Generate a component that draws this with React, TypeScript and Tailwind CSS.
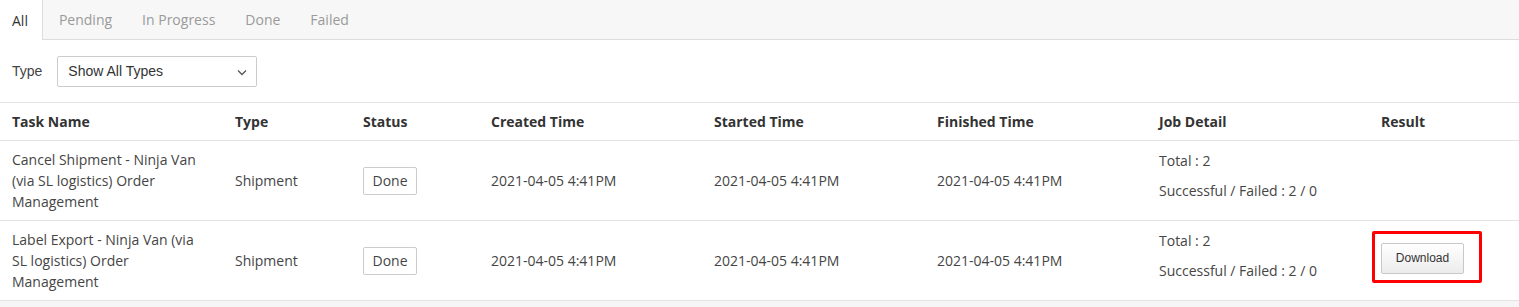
import React from "react";

const tabs = ["All", "Pending", "In Progress", "Done", "Failed"];

const rows = [
  {
    name: "Cancel Shipment - Ninja Van (via SL logistics) Order Management",
    download: false,
  },
  {
    name: "Label Export - Ninja Van (via SL logistics) Order Management",
    download: true,
  },
];

const cols = "grid grid-cols-[223px_128px_128px_223px_223px_222px_222px_1fr]";

export default function App() {
  return (
    <div
      className="h-[307px] w-[1519px] bg-[#f5f5f5] text-[14px] text-[#333]"
      style={{ fontFamily: '"Open Sans", sans-serif' }}
    >
      <div className="bg-white">
        {/* Tabs */}
        <div className="flex h-[40px] border-b border-[#dddddd] bg-[#f7f7f7]">
          {tabs.map((t, i) =>
            i === 0 ? (
              <div
                key={t}
                className="-mb-px flex h-[40px] items-center border-r border-[#dddddd] bg-white pl-[12px] pr-[14px] text-[#333]"
              >
                {t}
              </div>
            ) : (
              <div key={t} className={`flex items-center px-[15px] text-[#9a9a9a] ${i === 1 ? "pl-[16px]" : ""}`}>
                {t}
              </div>
            )
          )}
        </div>

        {/* Filter */}
        <div className="flex h-[62px] items-start pl-[12px] pt-[16px]">
          <span
            className="mr-[15px] mt-[5px] text-[14px] text-[#444]"
            style={{ fontFamily: '"Liberation Sans", Arial, sans-serif' }}
          >
            Type
          </span>
          <div
            className="flex h-[31px] w-[200px] items-center justify-between rounded-[2px] border border-[#cccccc] bg-white pl-[10px] pr-[8px] text-[14px] text-[#333]"
            style={{ fontFamily: '"Liberation Sans", Arial, sans-serif' }}
          >
            <span>Show All Types</span>
            <svg width="12" height="12" viewBox="0 0 12 12" fill="none">
              <path d="M2 4.5 L6 8.5 L10 4.5" stroke="#555" strokeWidth="1.3" />
            </svg>
          </div>
        </div>

        {/* Table */}
        <div className="border-t border-[#e3e3e3]">
          <div className={`${cols} h-[38px] items-center border-b border-[#e3e3e3] font-bold text-[#333]`}>
            {["Task Name", "Type", "Status", "Created Time", "Started Time", "Finished Time", "Job Detail", "Result"].map(
              (h) => (
                <div key={h} className="px-[12px]">
                  {h}
                </div>
              )
            )}
          </div>
          {rows.map((r, i) => (
            <div
              key={i}
              className={`${cols} h-[80px] items-center border-b border-[#e3e3e3] leading-[21px] text-[#454545]`}
            >
              <div className="px-[12px]">{r.name}</div>
              <div className="px-[12px]">Shipment</div>
              <div className="px-[12px]">
                <span className="inline-flex h-[28px] w-[54px] items-center justify-center rounded-[2px] border border-[#cccccc] bg-white">
                  Done
                </span>
              </div>
              <div className="px-[12px]">2021-04-05 4:41PM</div>
              <div className="px-[12px]">2021-04-05 4:41PM</div>
              <div className="px-[12px]">2021-04-05 4:41PM</div>
              <div className="self-start px-[12px] pt-[9px]">
                <div>Total : 2</div>
                <div className="mt-[9px]">Successful / Failed : 2 / 0</div>
              </div>
              <div className="flex px-[12px]">
                {r.download && (
                  <div className="relative top-[-2px]">
                    <button
                      className="flex h-[31px] w-[83px] items-center justify-center rounded-[2px] border border-[#c8c8c8] bg-gradient-to-b from-white to-[#ececec] text-[12px] text-[#333]"
                      style={{ fontFamily: '"Liberation Sans", Arial, sans-serif' }}
                    >
                      Download
                    </button>
                    <div className="pointer-events-none absolute left-[-9px] top-[-12px] h-[52px] w-[110px] rounded-[2px] border-[3px] border-[#ff0000]" />
                  </div>
                )}
              </div>
            </div>
          ))}
        </div>
      </div>
    </div>
  );
}
